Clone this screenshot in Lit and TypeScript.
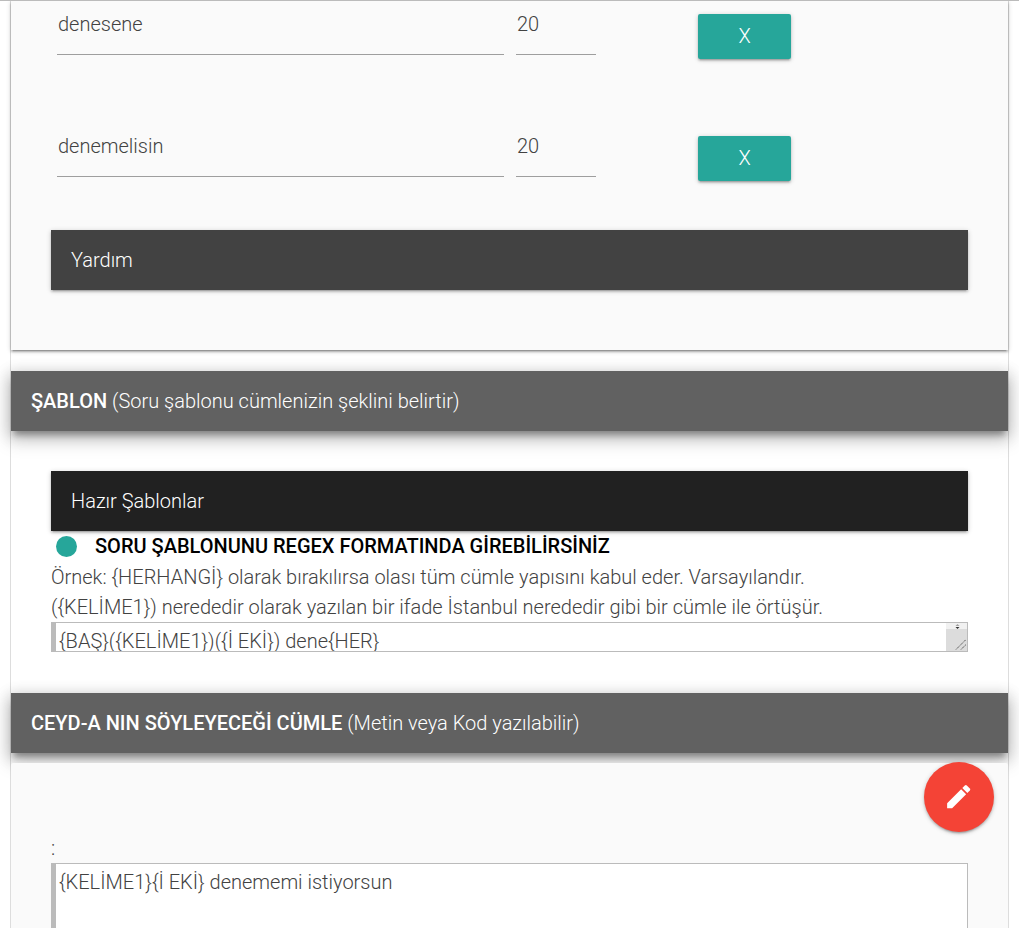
import { LitElement, html, css } from "lit";
import { customElement } from "lit/decorators.js";

@customElement("app-root")
export class AppRoot extends LitElement {
  static styles = css`
    :host { display: block; height: 928px; overflow: hidden; position: relative; background: #fff; font-family: Roboto, sans-serif; font-weight: 300; font-size: 20px; line-height: 27px; color: #424242; border-top: 1px solid #bbb; box-sizing: border-box; }
    .wrap { border-left: 1px solid #ddd; border-right: 1px solid #ddd; margin-left: 10px; margin-right: 10px; }
    .card { background: #fafafa; box-shadow: 0 2px 2px 0 rgba(0,0,0,.22), 0 3px 1px -2px rgba(0,0,0,.16), 0 1px 5px 0 rgba(0,0,0,.2); height: 349px; padding: 0 40px; box-sizing: border-box; }
    .row { display: flex; height: 122px; }
    .field { height: 54px; border-bottom: 1px solid #9e9e9e; box-sizing: border-box; margin-left: 6px; padding: 10px 0 0 1px; }
    .name { width: 447px; }
    .num { width: 80px; margin-left: 12px; }
    .btn { width: 93px; height: 45px; margin: 13px 0 0 102px; background: #26a69a; color: #fff; border-radius: 2px; display: flex; align-items: center; justify-content: center; box-shadow: 0 2px 2px 0 rgba(0,0,0,.14), 0 3px 1px -2px rgba(0,0,0,.12), 0 1px 5px 0 rgba(0,0,0,.2); }
    .bar { height: 60px; padding: 0 20px; display: flex; align-items: center; color: #fff; white-space: pre; box-shadow: 0 2px 2px 0 rgba(0,0,0,.14), 0 3px 1px -2px rgba(0,0,0,.12), 0 1px 5px 0 rgba(0,0,0,.2); }
    .help { background: #424242; margin-top: -15px; }
    .dark { background: #212121; }
    .head { background: #616161; padding: 0 20px; height: 60px; display: flex; align-items: center; color: #fff; white-space: pre; box-shadow: 0 8px 17px 2px rgba(0,0,0,.18), 0 3px 14px 2px rgba(0,0,0,.14), 0 7px 6px -3px rgba(0,0,0,.3); position: relative; }
    b { font-weight: 500; }
    .sec1 { margin-top: 21px; }
    .body { padding: 40px 40px 0; height: 262px; box-sizing: border-box; background: #fff; }
    .note { display: flex; align-items: center; height: 30px; color: #000; font-weight: 500; padding-left: 5px; }
    .dot { width: 21px; height: 21px; border-radius: 50%; background: #26a69a; margin-right: 18px; }
    .p { height: 30px; line-height: 30px; white-space: nowrap; }
    .p1 { margin-top: 1px; }
    .ta-wrap { position: relative; }
    textarea { display: block; width: 100%; box-sizing: border-box; height: 30px; margin: 0; padding: 5px 3px 0; border: 1px solid #bbb; border-left: 5px solid #bbb; background: #fff; font: inherit; line-height: 27px; color: inherit; overflow: hidden; resize: none; outline: none; }
    .sb { position: absolute; right: 1px; top: 1px; }
    .card2 { position: relative; background: #fafafa; margin-top: 10px; padding: 72px 40px 0; height: 300px; box-sizing: border-box; border-radius: 2px 2px 0 0; }
    .colon { height: 28px; line-height: 27px; }
    .ta2 { height: 200px; }
    .fab { position: absolute; left: 924px; top: 761px; width: 70px; height: 70px; border-radius: 50%; background: #f44336; display: flex; align-items: center; justify-content: center; box-shadow: 0 2px 2px 0 rgba(0,0,0,.14), 0 3px 1px -2px rgba(0,0,0,.12), 0 1px 5px 0 rgba(0,0,0,.2); }
    svg { display: block; }
  `;
  render() {
    const row = (t: string) => html`<div class="row"><div class="field name">${t}</div><div class="field num">20</div><div class="btn">X</div></div>`;
    return html`
      <div class="wrap">
        <div class="card">
          ${row("denesene")}
          ${row("denemelisin")}
          <div class="bar help">Yardım</div>
        </div>
        <div class="head sec1"><span><b>ŞABLON</b> (Soru şablonu cümlenizin şeklini belirtir)</span></div>
        <div class="body">
          <div class="bar dark">Hazır Şablonlar</div>
          <div class="note"><span class="dot"></span>SORU ŞABLONUNU REGEX FORMATINDA GİREBİLİRSİNİZ</div>
          <div class="p p1">Örnek: {HERHANGİ} olarak bırakılırsa olası tüm cümle yapısını kabul eder. Varsayılandır.</div>
          <div class="p">({KELİME1}) nerededir olarak yazılan bir ifade İstanbul nerededir gibi bir cümle ile örtüşür.</div>
          <div class="ta-wrap">
            <textarea spellcheck="false">{BAŞ}({KELİME1})({İ EKİ}) dene{HER}</textarea>
            <svg class="sb" width="21" height="28" viewBox="0 0 21 28">
              <rect width="21" height="28" fill="#f1f1f1"/>
              <rect y="6" width="21" height="22" fill="#dcdcdc"/>
              <path d="M11.5 1 L9.5 3 H13.5 Z" fill="#a0a0a0"/>
              <path d="M9.5 4 H13.5 L11.5 6 Z" fill="#303030"/>
              <path d="M10 26.5 L20 16.5 M15 26.5 L20 21.5" stroke="#555" stroke-width="1" stroke-dasharray="1.4 .6" fill="none"/>
            </svg>
          </div>
        </div>
        <div class="head"><span><b>CEYD-A NIN SÖYLEYECEĞİ CÜMLE</b> (Metin veya Kod yazılabilir)</span></div>
        <div class="card2">
          <div class="colon">:</div>
          <textarea class="ta2" spellcheck="false">{KELİME1}{İ EKİ} denememi istiyorsun</textarea>
        </div>
      </div>
      <div class="fab"><svg width="50" height="50" viewBox="0 0 50 50" fill="#fff"><g transform="translate(.8 .6)"><path d="M12.3 30.7 L26.3 16.7 L31.3 21.7 L17.3 35.7 H12.3 Z"/><path d="M27.5 15.5 L30 13 Q31 12 32 13 L35 16 Q36 17 35 18 L32.5 20.5 Z"/></g></svg></div>
    `;
  }
}
